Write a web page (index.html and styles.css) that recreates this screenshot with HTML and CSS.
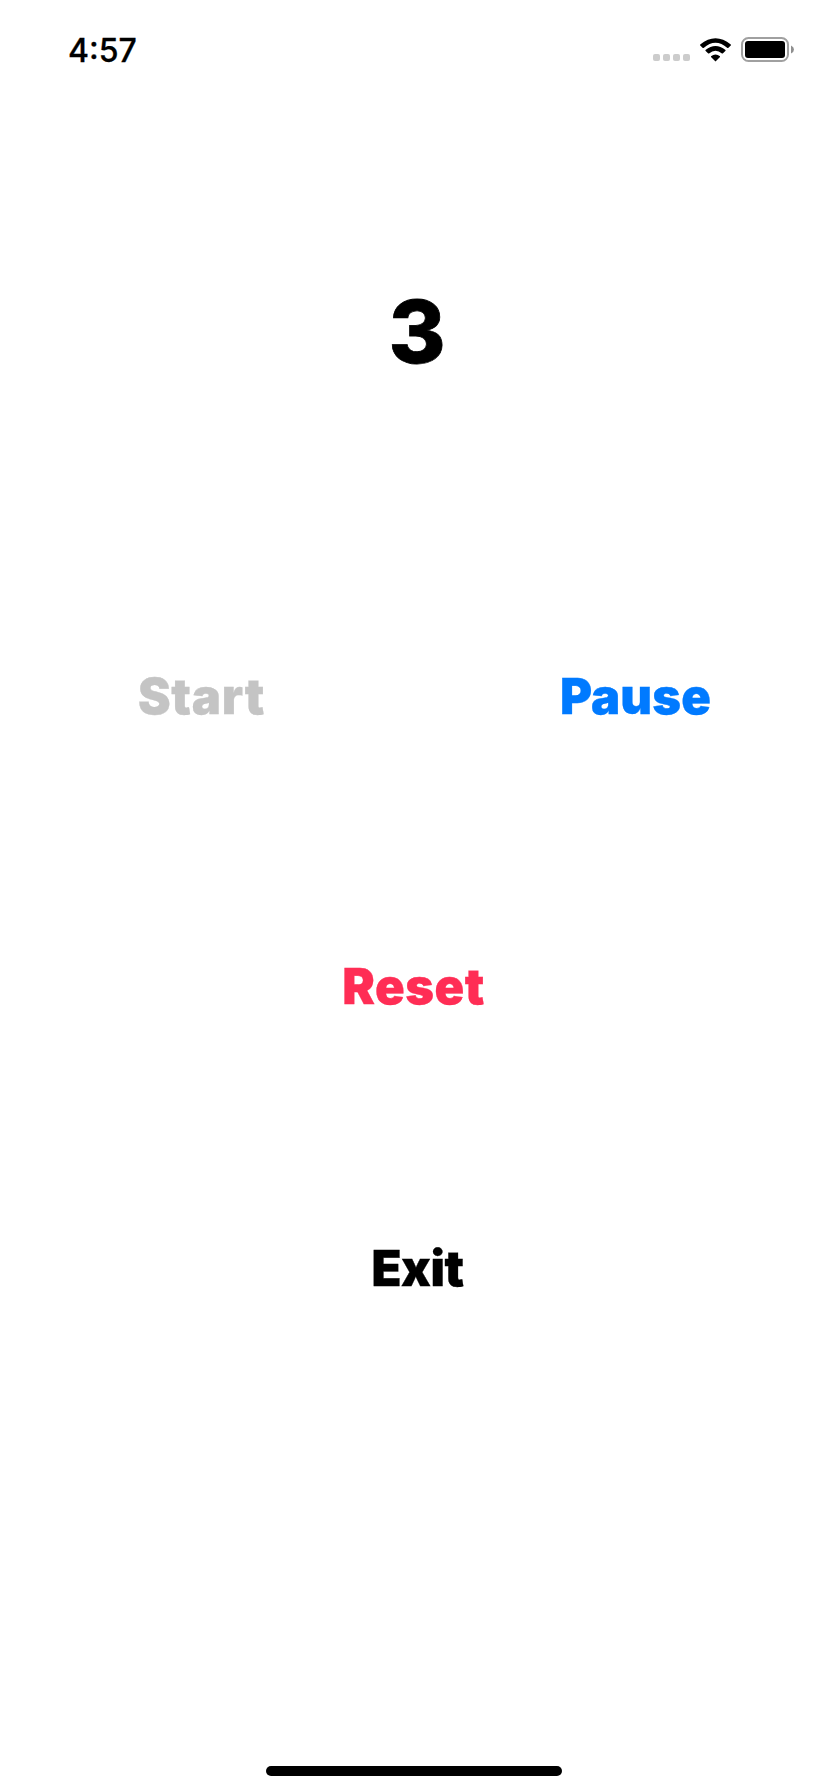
FILE: index.html
```html
<!DOCTYPE html>
<html lang="en">
<head>
<meta charset="utf-8">
<title>Timer</title>
<link rel="stylesheet" href="styles.css">
</head>
<body>
<div class="screen">
  <header class="status-bar">
    <span class="clock">4:57</span>
    <div class="indicators">
      <div class="cellular"><i></i><i></i><i></i><i></i></div>
      <svg class="wifi" width="31" height="24" viewBox="0 0 31 24" aria-label="Wi-Fi">
        <path d="M.2 6.6Q15.5-6.2 30.8 6.6L31 7.2L28.2 10Q27.8 10.2 27.4 10Q15.5-.6 3.6 10Q3.2 10.2 2.8 10L0 7.2Z"/>
        <path d="M5.5 12.1Q15.5 4 25.5 12.1L25.6 12.8L22.7 15.6L22 15.6Q15.5 9.8 9 15.6L8.3 15.6L5.4 12.8Z"/>
        <path d="M11 18.2Q15.5 15 20 18.2L20 19L15.5 23.6L11 19Z"/>
      </svg>
      <svg class="battery" width="53" height="25" viewBox="0 0 53 25" aria-label="Battery">
        <rect x="1" y="1" width="46" height="23" rx="6.5" fill="none" stroke="#a0a0a0" stroke-width="2"/>
        <rect x="4" y="4" width="40" height="17" rx="3"/>
        <path d="M50 8.5Q53 10 53 12.5T50 16.5Z" fill="#8f8f8f"/>
      </svg>
    </div>
  </header>
  <main class="timer">
    <div class="count">3</div>
    <div class="controls">
      <button class="action start" disabled>Start</button>
      <button class="action pause">Pause</button>
    </div>
    <button class="action reset">Reset</button>
    <button class="action exit">Exit</button>
  </main>
  <div class="home-indicator"></div>
</div>
</body>
</html>
```
FILE: styles.css
```css
* { box-sizing: border-box; }
body { margin: 0; background: #fff; font-family: Inter, "Liberation Sans", sans-serif; color: #000; }
.screen { width: 828px; height: 1792px; display: flex; flex-direction: column; }
.status-bar { height: 99px; padding: 0 34px 0 68px; display: flex; justify-content: space-between; align-items: center; }
.clock { padding-top: 2px; font-size: 32px; font-weight: 500; line-height: 40px; -webkit-text-stroke: 0.3px currentColor; }
.indicators { display: flex; align-items: center; gap: 10px; }
.cellular { display: flex; gap: 3px; padding-top: 16px; }
.cellular i { width: 7px; height: 7px; border-radius: 2px; background: #ccc; }
.wifi, .battery { display: block; }
.timer { flex: 1; display: flex; flex-direction: column; align-items: center; }
.count { margin-top: 173px; padding-left: 6px; height: 120px; line-height: 120px; font-size: 87px; font-weight: 800; -webkit-text-stroke: 0.8px currentColor; }
.controls { align-self: stretch; margin-top: 275px; padding: 0 117px 0 138px; display: flex; justify-content: space-between; }
.action { height: 60px; padding: 0; border: 0; background: none; font: 900 49px/60px Inter, "Liberation Sans", sans-serif; -webkit-text-stroke: 0.3px currentColor; }
.start { color: #c4c4c4; letter-spacing: 0.7px; }
.pause { color: #007aff; letter-spacing: 0.1px; }
.reset { margin-top: 230px; padding-right: 1px; color: #ff2d55; letter-spacing: 0.5px; }
.exit { margin-top: 222px; padding-left: 7px; color: #000; letter-spacing: -0.5px; }
.home-indicator { width: 296px; height: 10px; margin: 0 auto 16px; border-radius: 5px; background: #000; }
```
